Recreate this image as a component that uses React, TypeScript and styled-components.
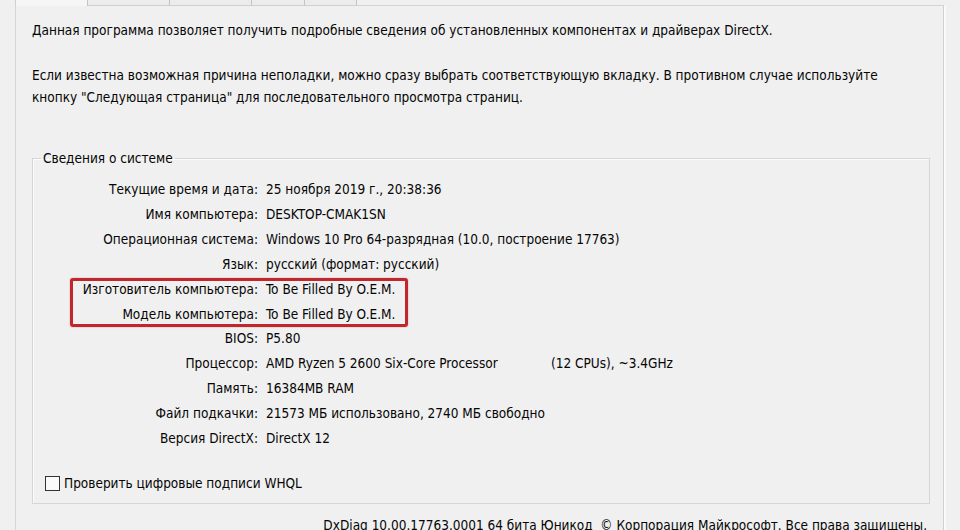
import React from "react";
import styled, { createGlobalStyle } from "styled-components";

const GlobalStyle = createGlobalStyle`
  html, body { margin: 0; padding: 0; background: #f0f0f0; }
  body {
    font-family: "DejaVu Sans Condensed", "DejaVu Sans", sans-serif;
    font-stretch: condensed;
    font-size: 13.5px;
    color: #050505;
  }
`;

const Window = styled.div`
  width: 960px;
  height: 530px;
  overflow: hidden;
  background: #f0f0f0;
`;

const TabStrip = styled.div`
  display: flex;
  align-items: stretch;
  height: 6px;
  padding-left: 15px;
  width: 944px;
  box-sizing: border-box;
`;

const Tab = styled.div<{ w: number; active?: boolean }>`
  width: ${(p) => p.w}px;
  box-sizing: border-box;
  background: ${(p) => (p.active ? "#f6f6f6" : "#ececec")};
  border-right: 1px solid #c4c4c4;
  border-left: ${(p) => (p.active ? "1px solid #cfcfcf" : "none")};
  border-bottom: ${(p) => (p.active ? "none" : "1px solid #cfcfcf")};
`;

const TabFiller = styled.div`
  flex: 1;
  border-bottom: 1px solid #d4d4d4;
`;

const Panel = styled.div`
  margin-left: 15px;
  width: 929px;
  height: 524px;
  box-sizing: border-box;
  border-left: 1px solid #d6d6d6;
  border-right: 1px solid #d0d0d0;
  box-shadow: 2px 0 0 #fafafa;
  padding: 13px 13px 0 16px;
  display: flex;
  flex-direction: column;
`;

const Paragraph = styled.p<{ gap?: number }>`
  margin: ${(p) => p.gap || 0}px 0 0 0;
  line-height: 22px;
  white-space: pre-line;
`;

const Group = styled.fieldset`
  margin: 39px 0 0 0;
  padding: 8px 0 9px 0;
  min-width: 0;
  border: 1px solid #d6d6d6;
  box-shadow: inset 1px 1px 0 #fbfbfb;
`;

const GroupTitle = styled.legend`
  margin-left: 8px;
  padding: 0 2px;
  line-height: 22px;
`;

const InfoGrid = styled.div`
  display: grid;
  grid-template-columns: 225px 1fr;
  column-gap: 8px;
`;

const Label = styled.div`
  text-align: right;
  line-height: 24.9px;
  white-space: nowrap;
`;

const Value = styled.div`
  line-height: 24.9px;
  white-space: nowrap;
  display: flex;
`;

const ValuePart = styled.span<{ w?: number }>`
  display: inline-block;
  min-width: ${(p) => (p.w ? `${p.w}px` : "auto")};
`;

const Highlight = styled.div`
  grid-column: 1 / -1;
  display: grid;
  grid-template-columns: subgrid;
  position: relative;

  &::after {
    content: "";
    position: absolute;
    left: 37px;
    width: 338px;
    top: 1px;
    bottom: -1px;
    box-sizing: border-box;
    border: 3px solid #c0272d;
    border-radius: 3px;
    box-shadow: 0 0 1.5px rgba(192, 39, 45, 0.55);
    pointer-events: none;
  }
`;

const CheckRow = styled.label`
  display: flex;
  align-items: center;
  gap: 4px;
  margin: 21.5px 0 0 12px;
  line-height: 22px;
`;

const CheckBox = styled.span`
  width: 15px;
  height: 15px;
  box-sizing: border-box;
  border: 1px solid #333;
  background: #fafafa;
`;

const Footer = styled.div`
  margin-top: 10px;
  padding-right: 3px;
  text-align: right;
  line-height: 22px;
  white-space: pre;
`;

type Row = { label: string; value: string; extra?: string };

const rowsTop: Row[] = [
  { label: "Текущие время и дата:", value: "25 ноября 2019 г., 20:38:36" },
  { label: "Имя компьютера:", value: "DESKTOP-CMAK1SN" },
  { label: "Операционная система:", value: "Windows 10 Pro 64-разрядная (10.0, построение 17763)" },
  { label: "Язык:", value: "русский (формат: русский)" },
];

const rowsMarked: Row[] = [
  { label: "Изготовитель компьютера:", value: "To Be Filled By O.E.M." },
  { label: "Модель компьютера:", value: "To Be Filled By O.E.M." },
];

const rowsBottom: Row[] = [
  { label: "BIOS:", value: "P5.80" },
  { label: "Процессор:", value: "AMD Ryzen 5 2600 Six-Core Processor", extra: "(12 CPUs), ~3.4GHz" },
  { label: "Память:", value: "16384MB RAM" },
  { label: "Файл подкачки:", value: "21573 МБ использовано, 2740 МБ свободно" },
  { label: "Версия DirectX:", value: "DirectX 12" },
];

const renderRows = (rows: Row[]) =>
  rows.map((r) => (
    <React.Fragment key={r.label}>
      <Label>{r.label}</Label>
      <Value>
        {r.extra ? (
          <>
            <ValuePart w={285}>{r.value}</ValuePart>
            <ValuePart>{r.extra}</ValuePart>
          </>
        ) : (
          <ValuePart>{r.value}</ValuePart>
        )}
      </Value>
    </React.Fragment>
  ));

export default function App() {
  return (
    <Window>
      <GlobalStyle />
      <TabStrip>
        <Tab w={73} active />
        <Tab w={82} />
        <Tab w={82} />
        <Tab w={53} />
        <Tab w={52} />
        <TabFiller />
      </TabStrip>
      <Panel>
        <Paragraph>
          Данная программа позволяет получить подробные сведения об установленных компонентах и драйверах DirectX.
        </Paragraph>
        <Paragraph gap={23}>
          {"Если известна возможная причина неполадки, можно сразу выбрать соответствующую вкладку. В противном случае используйте\nкнопку \"Следующая страница\" для последовательного просмотра страниц."}
        </Paragraph>
        <Group>
          <GroupTitle>Сведения о системе</GroupTitle>
          <InfoGrid>
            {renderRows(rowsTop)}
            <Highlight>{renderRows(rowsMarked)}</Highlight>
            {renderRows(rowsBottom)}
          </InfoGrid>
          <CheckRow>
            <CheckBox />
            Проверить цифровые подписи WHQL
          </CheckRow>
        </Group>
        <Footer>
          {"DxDiag 10.00.17763.0001 64 бита Юникод  © Корпорация Майкрософт. Все права защищены."}
        </Footer>
      </Panel>
    </Window>
  );
}
